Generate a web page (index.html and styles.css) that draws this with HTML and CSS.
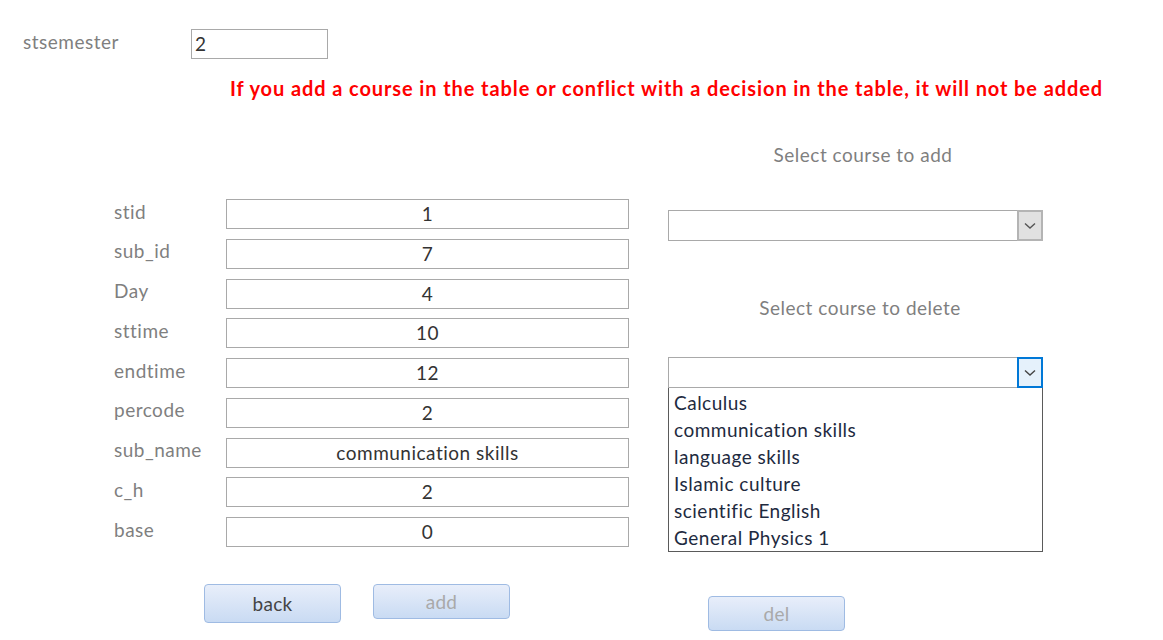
FILE: index.html
```html
<!DOCTYPE html>
<html lang="en">
<head>
    <meta charset="UTF-8">
    <title>Student Courses</title>
    <link rel="stylesheet" href="styles.css">
</head>
<body>
    <div class="top-row">
        <div class="top-label">stsemester</div>
        <div class="top-input">2</div>
    </div>

    <div class="warning">If you add a course in the table or conflict with a decision in the table, it will not be added</div>

    <div class="main">
        <div class="left-col">
            <div class="form-grid">
                <div class="field-label">stid</div><div class="field-box">1</div>
                <div class="field-label">sub_id</div><div class="field-box">7</div>
                <div class="field-label">Day</div><div class="field-box">4</div>
                <div class="field-label">sttime</div><div class="field-box">10</div>
                <div class="field-label">endtime</div><div class="field-box">12</div>
                <div class="field-label">percode</div><div class="field-box">2</div>
                <div class="field-label">sub_name</div><div class="field-box">communication skills</div>
                <div class="field-label">c_h</div><div class="field-box">2</div>
                <div class="field-label">base</div><div class="field-box">0</div>
            </div>
            <div class="left-buttons">
                <button class="btn btn-back">back</button>
                <button class="btn btn-add" disabled>add</button>
            </div>
        </div>

        <div class="right-col">
            <div class="section-title title-add">Select course to add</div>
            <div class="combo">
                <div class="combo-text"></div>
                <div class="combo-btn">
                    <svg width="12" height="8" viewBox="0 0 12 8"><path d="M1 1.5 L6 6 L11 1.5" fill="none" stroke="#555" stroke-width="1.4"/></svg>
                </div>
            </div>

            <div class="section-title title-del">Select course to delete</div>
            <div class="combo combo-open">
                <div class="combo-text"></div>
                <div class="combo-btn">
                    <svg width="12" height="8" viewBox="0 0 12 8"><path d="M1 1.5 L6 6 L11 1.5" fill="none" stroke="#444" stroke-width="1.4"/></svg>
                </div>
            </div>
            <div class="combo-list">
                <div class="list-item">Calculus</div>
                <div class="list-item">communication skills</div>
                <div class="list-item">language skills</div>
                <div class="list-item">Islamic culture</div>
                <div class="list-item">scientific English</div>
                <div class="list-item">General Physics 1</div>
            </div>

            <button class="btn btn-del" disabled>del</button>
        </div>
    </div>
</body>
</html>
```

FILE: styles.css
```css
:root {
    --label: #7f7f7f;
    --text: #3b3b3b;
    --border: #a9a9a9;
    --list-text: #1e2a40;
}

* { box-sizing: border-box; margin: 0; padding: 0; }

body {
    font-family: Lato, "Open Sans", sans-serif;
    font-size: 19px;
    letter-spacing: 0.5px;
    background: #fff;
    color: var(--text);
    width: 1163px;
    height: 640px;
    overflow: hidden;
}

.top-row {
    display: flex;
    align-items: center;
    padding: 29px 0 0 23px;
}

.top-label {
    width: 168px;
    color: var(--label);
    margin-top: -6px;
}

.top-input {
    width: 137px;
    height: 30px;
    border: 1px solid var(--border);
    padding: 0 0 0 3px;
    line-height: 28px;
    color: #333;
}

.warning {
    margin: 17px 0 0 230px;
    color: #ff0000;
    font-weight: bold;
    font-size: 20px;
    letter-spacing: 0.9px;
    line-height: 24px;
    white-space: nowrap;
}

.main {
    display: flex;
}

.left-col {
    margin-left: 114px;
    width: 515px;
    padding-top: 99px;
}

.form-grid {
    display: grid;
    grid-template-columns: 112px 403px;
    grid-auto-rows: 30px;
    row-gap: 9.75px;
    align-items: center;
}

.field-label {
    color: var(--label);
    margin-top: -6px;
}

.field-box {
    height: 30px;
    border: 1px solid var(--border);
    text-align: center;
    line-height: 28px;
    color: #333;
}

.left-buttons {
    display: flex;
    align-items: flex-start;
    gap: 32px;
    margin: 37px 0 0 90px;
}

.btn {
    width: 137px;
    height: 35px;
    border: 1px solid #9fbbe3;
    border-radius: 4px;
    background: linear-gradient(#e8eefa, #c9dbf3);
    font-family: Lato, "Open Sans", sans-serif;
    font-size: 19px;
    letter-spacing: 0.3px;
    color: #444;
}

.btn-back { height: 39px; }

.btn:disabled { color: #a9a9a9; }

.right-col {
    margin-left: 39px;
    width: 375px;
}

.section-title {
    color: var(--label);
    text-align: center;
    line-height: 24px;
}

.title-add {
    padding-left: 15px;
    margin-top: 43px;
}

.title-del {
    padding-left: 9px;
    margin-top: 55px;
}

.combo {
    display: flex;
    height: 31px;
    border: 1px solid var(--border);
    background: #fff;
    margin-top: 43px;
}

.title-del + .combo { margin-top: 37px; }

.combo-text { flex: 1; }

.combo-btn {
    width: 26px;
    background: #e1e1e1;
    border: 2px solid #b4b4b4;
    margin: -1px -1px -1px 0;
    display: flex;
    align-items: center;
    justify-content: center;
}

.combo-open .combo-btn {
    background: #e5f1fb;
    border-color: #0078d7;
}

.combo-list {
    border: 1px solid #5a5a5a;
    border-top: none;
    height: 164px;
    padding: 1px 0 0 5px;
}

.list-item {
    color: var(--list-text);
    line-height: 27px;
}

.btn-del {
    display: block;
    margin: 44px 0 0 40px;
}
```
